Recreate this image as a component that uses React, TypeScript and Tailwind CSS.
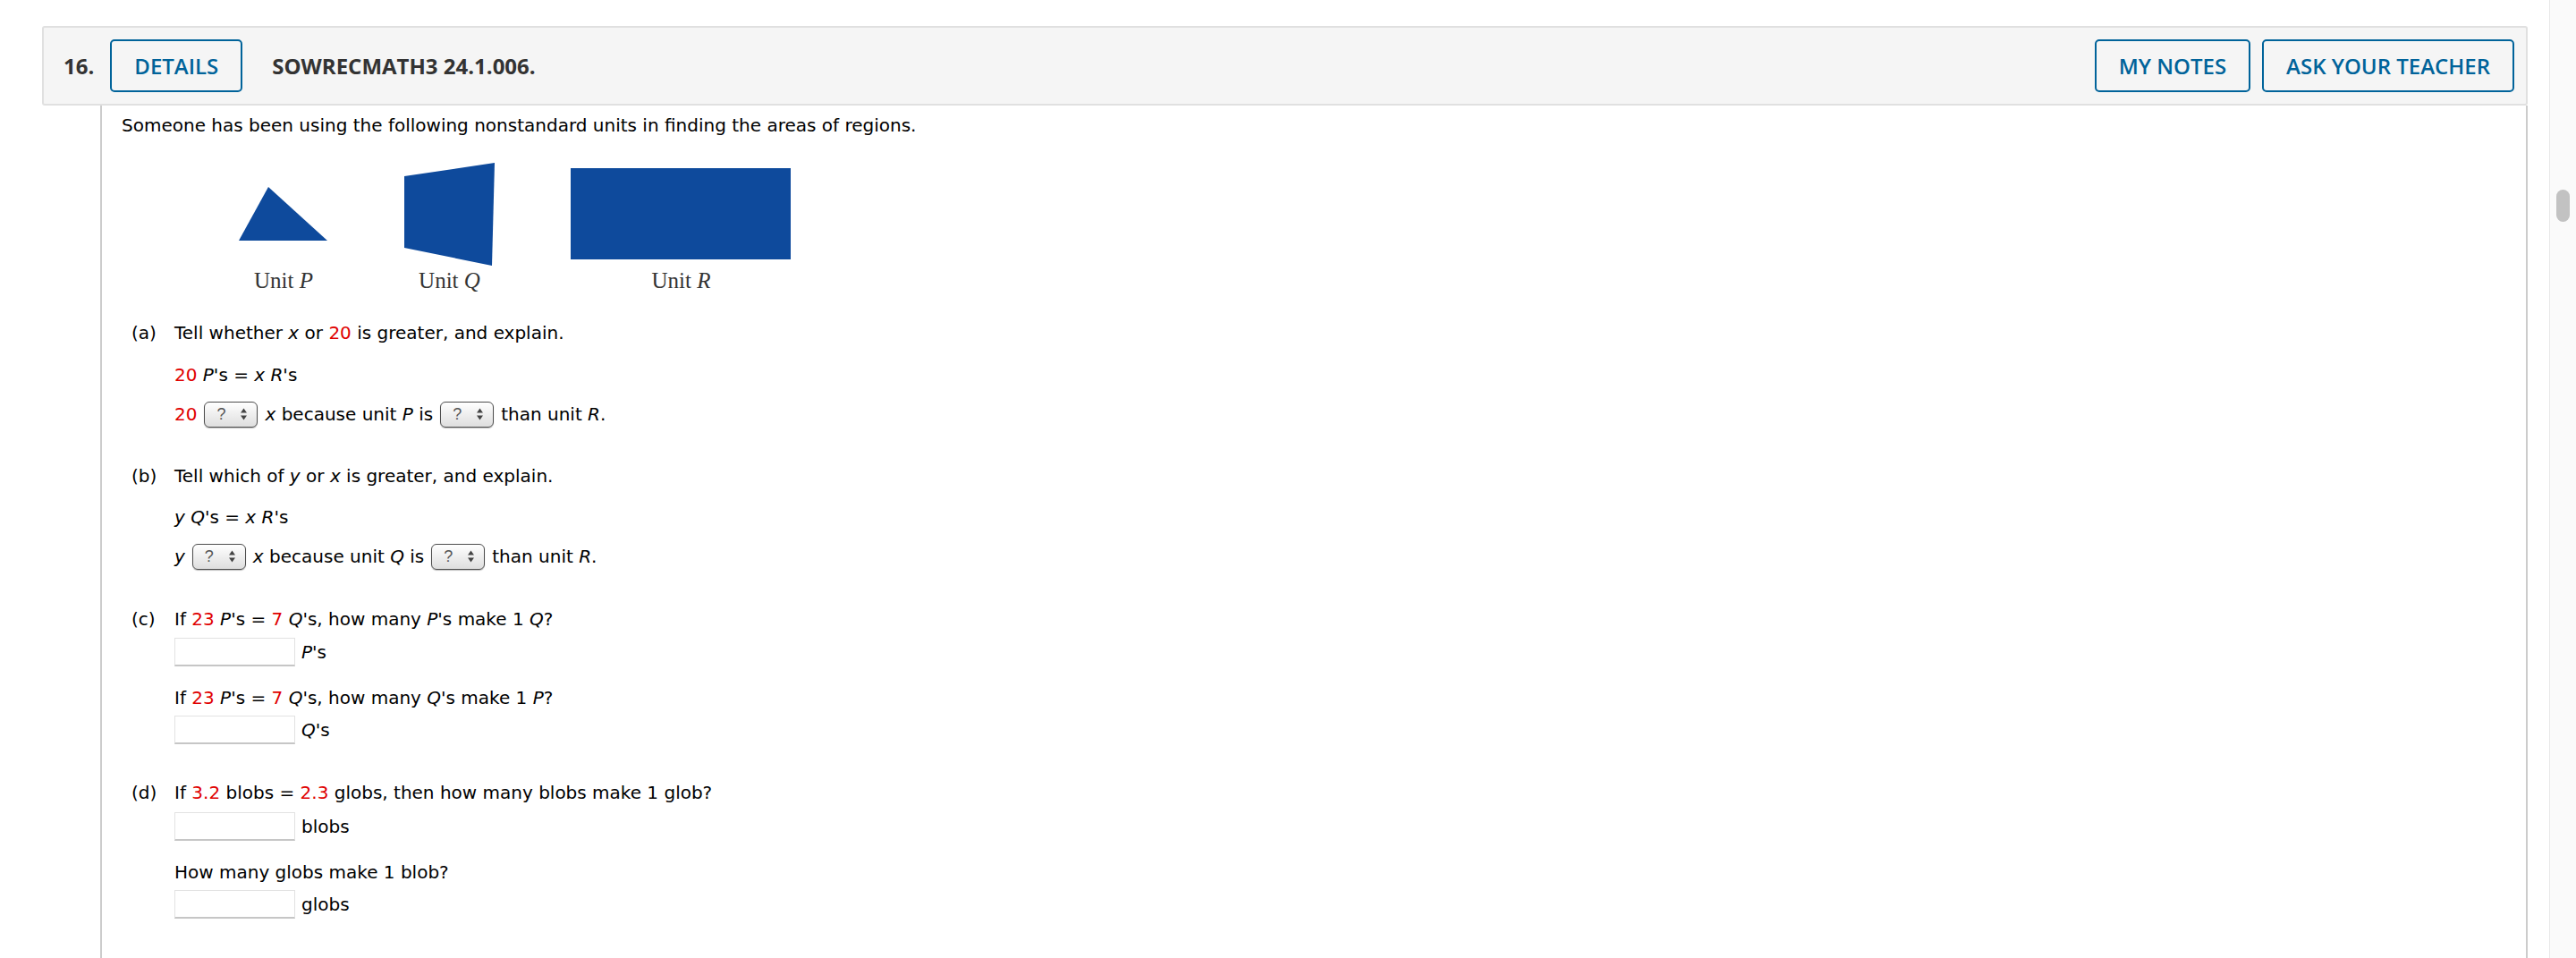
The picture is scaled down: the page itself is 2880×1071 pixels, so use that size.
import type { ReactNode } from "react";

const red = "text-[#e00000]";

function Sel() {
  return (
    <span className="ml-[8px] mr-[8px] inline-flex h-[29px] w-[60px] shrink-0 items-center justify-between rounded-[6px] border-[1.5px] border-[#4d4d4d] bg-linear-to-b from-white to-[#dedede] pl-[13px] pr-[10px] font-['Liberation_Sans',sans-serif] text-[18px] leading-none text-[#555] shadow-[0_1px_1px_rgba(0,0,0,0.25)]">
      ?
      <svg width="9" height="16" viewBox="0 0 9 16">
        <path d="M4.5 1.5 L8 6.5 H1 Z M4.5 14.5 L8 9.5 H1 Z" fill="#444" />
      </svg>
    </span>
  );
}

function Field({ children, className = "" }: { children: ReactNode; className?: string }) {
  return (
    <div className={`flex h-[32px] items-center ${className}`}>
      <div className="h-[32px] w-[135px] border border-[#e2e2e2] border-b-2 border-b-[#c6c6c6] bg-white" />
      <span className="ml-[7px]">{children}</span>
    </div>
  );
}

function Part({ label, className = "", children }: { label: string; className?: string; children: ReactNode }) {
  return (
    <div className={`flex ${className}`}>
      <div className="w-[48px] shrink-0">{label}</div>
      <div className="flex-1">{children}</div>
    </div>
  );
}

function HeadButton({ children, className = "" }: { children: ReactNode; className?: string }) {
  return (
    <button className={`flex h-[59px] items-center rounded-[5px] border-2 border-[#00639a] px-[25px] font-semibold leading-none text-[#00639a] ${className}`}>
      {children}
    </button>
  );
}

export default function App() {
  const shape = "#0e4a9c";
  return (
    <div className="flex h-[1071px] w-[2880px] overflow-hidden bg-white font-['DejaVu_Sans',Verdana,sans-serif] text-[20px] leading-[24px] text-black">
      <div className="min-w-0 flex-1 pl-[47px] pr-[24px] pt-[29px]">
        {/* question header */}
        <header className="flex h-[89px] items-center rounded-[3px] border-2 border-[#e0e0e0] bg-[#f5f5f5] pl-[22px] pr-[13px] font-['Open_Sans',sans-serif] text-[24px]">
          <span className="font-bold text-[#333]">16.</span>
          <HeadButton className="ml-[18px]">DETAILS</HeadButton>
          <span className="ml-[33px] font-bold text-[#333]">SOWRECMATH3 24.1.006.</span>
          <div className="ml-auto flex gap-[13px]">
            <HeadButton>MY NOTES</HeadButton>
            <HeadButton>ASK YOUR TEACHER</HeadButton>
          </div>
        </header>

        {/* question body */}
        <div className="ml-[65px] min-h-[1000px] border-x-2 border-[#cccccc] pl-[22px] pt-[10px]">
          <p>Someone has been using the following nonstandard units in finding the areas of regions.</p>

          <div className="ml-[131px] mt-[30px] flex gap-[85px] font-['Liberation_Serif',serif] text-[25px] leading-[24px] text-[#333]">
            <div className="flex flex-col items-center">
              <svg width="100" height="118" viewBox="0 0 100 118">
                <polygon points="0,87 33,27 99,87" fill={shape} />
              </svg>
              <span className="mt-[2px]">
                Unit <i>P</i>
              </span>
            </div>
            <div className="flex flex-col items-center">
              <svg width="101" height="118" viewBox="0 0 101 118">
                <polygon points="0,15 101,0 98,115 0,95" fill={shape} />
              </svg>
              <span className="mt-[2px]">
                Unit <i>Q</i>
              </span>
            </div>
            <div className="flex flex-col items-center">
              <svg width="247" height="118" viewBox="0 0 247 118">
                <rect x="0" y="6" width="246" height="102" fill={shape} />
              </svg>
              <span className="mt-[2px]">
                Unit <i>R</i>
              </span>
            </div>
          </div>

          <div className="ml-[11px]">
            <Part label="(a)" className="mt-[34px]">
              <p>
                Tell whether <i>x</i> or <span className={red}>20</span> is greater, and explain.
              </p>
              <p className="mt-[23px]">
                <span className={red}>20</span> <i>P'</i>s = <i>x R'</i>s
              </p>
              <div className="mt-[20px] flex h-[24px] items-center whitespace-pre">
                <span className={red}>20</span>
                <Sel />
                <i>x</i>
                <span> because unit </span>
                <i>P</i>
                <span> is</span>
                <Sel />
                <span>than unit </span>
                <i>R</i>
                <span>.</span>
              </div>
            </Part>

            <Part label="(b)" className="mt-[45px]">
              <p>
                Tell which of <i>y</i> or <i>x</i> is greater, and explain.
              </p>
              <p className="mt-[22px]">
                <i>y Q'</i>s = <i>x R'</i>s
              </p>
              <div className="mt-[20px] flex h-[24px] items-center whitespace-pre">
                <i>y</i>
                <Sel />
                <i>x</i>
                <span> because unit </span>
                <i>Q</i>
                <span> is</span>
                <Sel />
                <span>than unit </span>
                <i>R</i>
                <span>.</span>
              </div>
            </Part>

            <Part label="(c)" className="mt-[46px]">
              <p>
                If <span className={red}>23</span> <i>P'</i>s = <span className={red}>7</span> <i>Q'</i>s, how many{" "}
                <i>P</i>'s make 1 <i>Q</i>?
              </p>
              <Field className="mt-[9px]">
                <i>P</i>'s
              </Field>
              <p className="mt-[23px]">
                If <span className={red}>23</span> <i>P'</i>s = <span className={red}>7</span> <i>Q'</i>s, how many{" "}
                <i>Q</i>'s make 1 <i>P</i>?
              </p>
              <Field className="mt-[8px]">
                <i>Q</i>'s
              </Field>
            </Part>

            <Part label="(d)" className="mt-[42px]">
              <p>
                If <span className={red}>3.2</span> blobs = <span className={red}>2.3</span> globs, then how many blobs
                make 1 glob?
              </p>
              <Field className="mt-[10px]">blobs</Field>
              <p className="mt-[23px]">How many globs make 1 blob?</p>
              <Field className="mt-[8px]">globs</Field>
            </Part>
          </div>
        </div>
      </div>

      {/* page scrollbar */}
      <div className="h-full w-[30px] shrink-0 border-l border-[#e8e8e8] bg-[#fafafa] pl-[7px] pt-[212px]">
        <div className="h-[36px] w-[15px] rounded-full bg-[#c2c2c2]" />
      </div>
    </div>
  );
}
